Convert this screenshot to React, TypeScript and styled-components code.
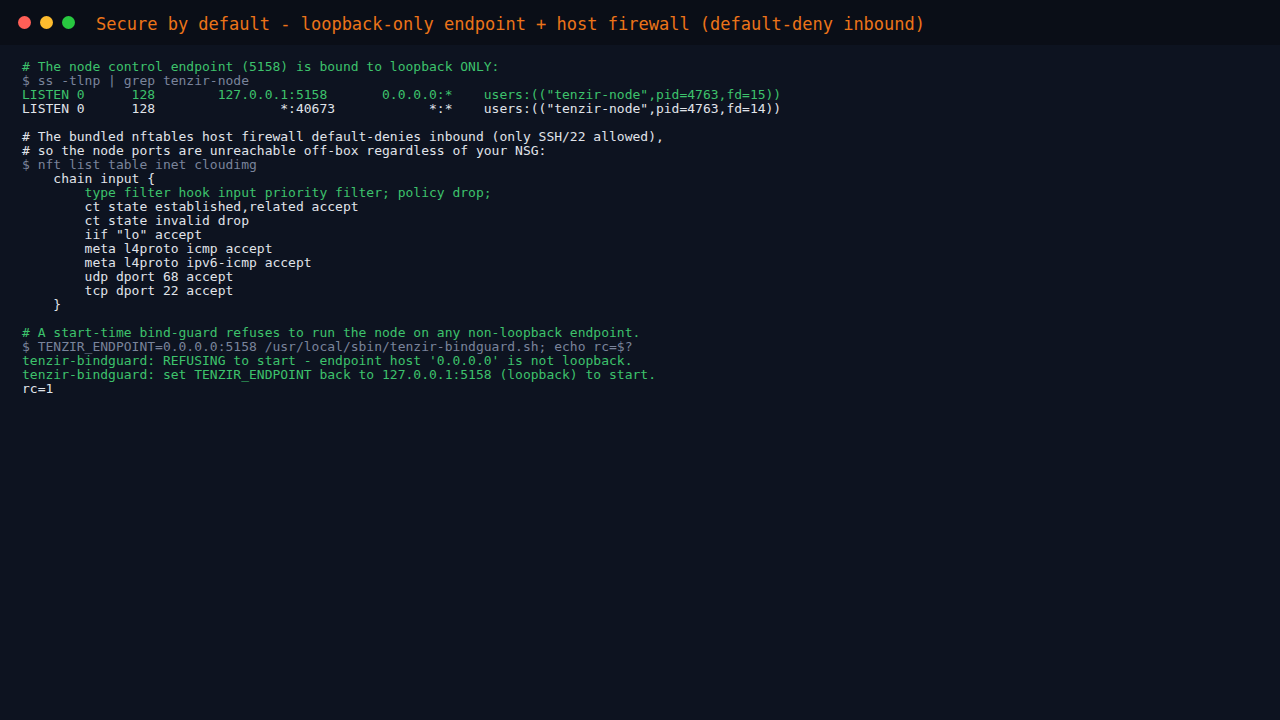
import React from "react";
import styled, { createGlobalStyle } from "styled-components";

const mono = `"DejaVu Sans Mono", monospace`;

const GlobalStyle = createGlobalStyle`
  html, body { margin: 0; padding: 0; background: #0d1320; }
  body { font-family: ${mono}; }
`;

const Window = styled.div`
  width: 1280px;
  height: 720px;
  background: #0d1320;
  display: flex;
  flex-direction: column;
  overflow: hidden;
`;

const TitleBar = styled.div`
  height: 45px;
  flex: none;
  display: flex;
  align-items: center;
  gap: 21px;
  padding: 0 18px;
  background: #0a0e17;
`;

const Dots = styled.div`
  display: flex;
  gap: 9px;
`;

const Dot = styled.span<{ $color: string }>`
  width: 13px;
  height: 13px;
  border-radius: 50%;
  background: ${(p) => p.$color};
`;

const Title = styled.div`
  font-family: ${mono};
  font-size: 17px;
  padding-top: 3px;
  color: #ec7419;
  white-space: pre;
`;

const Terminal = styled.pre`
  margin: 0;
  padding: 15px 22px;
  font-family: ${mono};
  font-size: 13px;
  line-height: 14px;
  color: #e0e4ea;
`;

type Tone = "comment" | "prompt" | "ok" | "plain";

const toneColor: Record<Tone, string> = {
  comment: "#3dc26c",
  prompt: "#7a849b",
  ok: "#3dc26c",
  plain: "#e0e4ea",
};

const Line = styled.div<{ $tone: Tone }>`
  white-space: pre;
  min-height: 14px;
  color: ${(p) => toneColor[p.$tone]};
`;

const lines: [Tone, string][] = [
  ["comment", "# The node control endpoint (5158) is bound to loopback ONLY:"],
  ["prompt", "$ ss -tlnp | grep tenzir-node"],
  ["ok", 'LISTEN 0      128        127.0.0.1:5158       0.0.0.0:*    users:(("tenzir-node",pid=4763,fd=15))'],
  ["plain", 'LISTEN 0      128                *:40673            *:*    users:(("tenzir-node",pid=4763,fd=14))'],
  ["plain", ""],
  ["plain", "# The bundled nftables host firewall default-denies inbound (only SSH/22 allowed),"],
  ["plain", "# so the node ports are unreachable off-box regardless of your NSG:"],
  ["prompt", "$ nft list table inet cloudimg"],
  ["plain", "    chain input {"],
  ["ok", "        type filter hook input priority filter; policy drop;"],
  ["plain", "        ct state established,related accept"],
  ["plain", "        ct state invalid drop"],
  ["plain", '        iif "lo" accept'],
  ["plain", "        meta l4proto icmp accept"],
  ["plain", "        meta l4proto ipv6-icmp accept"],
  ["plain", "        udp dport 68 accept"],
  ["plain", "        tcp dport 22 accept"],
  ["plain", "    }"],
  ["plain", ""],
  ["comment", "# A start-time bind-guard refuses to run the node on any non-loopback endpoint."],
  ["prompt", "$ TENZIR_ENDPOINT=0.0.0.0:5158 /usr/local/sbin/tenzir-bindguard.sh; echo rc=$?"],
  ["ok", "tenzir-bindguard: REFUSING to start - endpoint host '0.0.0.0' is not loopback."],
  ["ok", "tenzir-bindguard: set TENZIR_ENDPOINT back to 127.0.0.1:5158 (loopback) to start."],
  ["plain", "rc=1"],
];

export default function App() {
  return (
    <>
      <GlobalStyle />
      <Window>
        <TitleBar>
          <Dots>
            <Dot $color="#ff5f57" />
            <Dot $color="#febc2e" />
            <Dot $color="#28c840" />
          </Dots>
          <Title>Secure by default - loopback-only endpoint + host firewall (default-deny inbound)</Title>
        </TitleBar>
        <Terminal>
          {lines.map(([tone, text], i) => (
            <Line key={i} $tone={tone}>
              {text}
            </Line>
          ))}
        </Terminal>
      </Window>
    </>
  );
}
